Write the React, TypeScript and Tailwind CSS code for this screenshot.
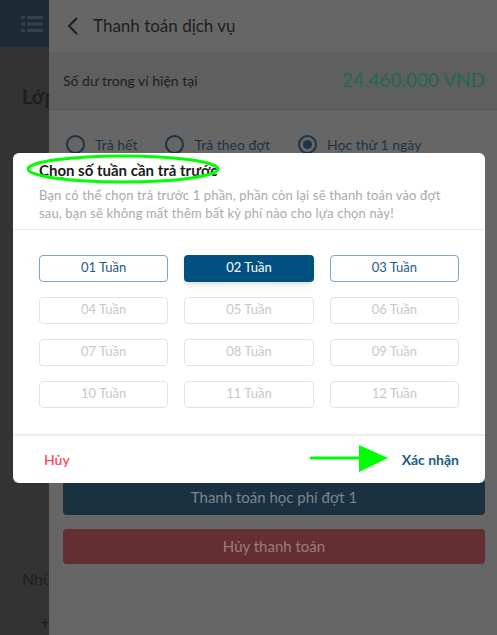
import React, { useState } from "react";

const weeks = Array.from({ length: 12 }, (_, i) => String(i + 1).padStart(2, "0"));

const Radio = ({ label, checked }: { label: string; checked?: boolean }) => (
  <div className="flex items-center gap-[10px]">
    <span className="flex h-[19px] w-[19px] items-center justify-center rounded-full border-2 border-[#1d3446]">
      {checked && <span className="h-[9px] w-[9px] rounded-full bg-[#1d3446]" />}
    </span>
    <span className="text-[14px] text-[#1d3446]">{label}</span>
  </div>
);

const App: React.FC = () => {
  const [selected, setSelected] = useState("02");
  const enabled = ["01", "02", "03"];

  return (
    <div
      className="relative flex h-[635px] w-[497px] overflow-hidden"
      style={{ fontFamily: "Lato, 'Open Sans', sans-serif" }}
    >
      {/* page behind the drawer */}
      <div className="flex w-[49px] flex-col bg-[#333333]">
        <div className="flex h-[47px] items-center bg-[#1e2a33] pl-[21px]">
          <svg width="22" height="20" viewBox="0 0 22 20" fill="#34414c">
            <rect x="0" y="2" width="4" height="3" />
            <rect x="6" y="2" width="16" height="3" />
            <rect x="0" y="8.5" width="4" height="3" />
            <rect x="6" y="8.5" width="16" height="3" />
            <rect x="0" y="15" width="4" height="3" />
            <rect x="6" y="15" width="16" height="3" />
          </svg>
        </div>
        <div className="mt-[34px] pl-[22px] text-[20px] font-bold text-[#1f1f1f]">Lớp</div>
        <div className="mt-[456px] pl-[22px] text-[16px] text-[#1f1f1f]">Những</div>
        <div className="mt-[22px] pl-[40px] text-[18px] leading-none text-[#1f1f1f]">+</div>
      </div>

      {/* drawer panel */}
      <div className="flex flex-1 flex-col bg-[#666666]">
        <div className="flex h-[52px] items-center gap-[14px] pl-[18px]">
          <svg width="12" height="18" viewBox="0 0 12 18" fill="none" stroke="#1e1e1e" strokeWidth="2">
            <path d="M10 1 L2 9 L10 17" />
          </svg>
          <span className="text-[17px] text-[#1e1e1e]">Thanh toán dịch vụ</span>
        </div>
        <div className="flex h-[58px] items-center justify-between border-b border-[#555555] bg-[#5f5f5f] pl-[14px] pr-[12px]">
          <span className="text-[14px] text-[#1e1e1e]">Số dư trong ví hiện tại</span>
          <span className="text-[19px] text-[#236b4a]">24.460.000 VND</span>
        </div>
        <div className="flex items-center gap-[28px] pl-[17px] pt-[24px]">
          <Radio label="Trả hết" />
          <Radio label="Trả theo đợt" />
          <Radio label="Học thử 1 ngày" checked />
        </div>
        <div className="mt-[325px] flex flex-col gap-[14px] pl-[14px] pr-[12px]">
          <div className="flex h-[35px] items-center justify-center rounded-[4px] bg-[#1a3142] text-[15px] text-[#7b858d]">
            Thanh toán học phí đợt 1
          </div>
          <div className="flex h-[35px] items-center justify-center rounded-[4px] bg-[#632f31] text-[15px] text-[#9a7d7e]">
            Hủy thanh toán
          </div>
        </div>
      </div>

      {/* modal */}
      <div className="absolute left-[13px] top-[153px] flex h-[330px] w-[472px] flex-col rounded-[6px] bg-white">
        <div className="border-b border-[#ececec] px-[26px] pb-[7px] pt-[6px]">
          <div className="text-[15px] font-bold text-[#1a1a1a]">Chọn số tuần cần trả trước</div>
          <p className="mt-[4px] text-[13px] leading-[18px] tracking-[0.15px] text-[#aaaaaa]">
            Bạn có thể chọn trả trước 1 phần, phần còn lại sẽ thanh toán vào đợt sau, bạn sẽ không mất thêm bất kỳ phí nào cho lựa chọn này!
          </p>
        </div>
        <div className="grid grid-cols-3 gap-x-[16px] gap-y-[15px] px-[26px] pb-[26px] pt-[25px]">
          {weeks.map((w) => {
            const on = enabled.includes(w);
            const active = selected === w;
            return (
              <button
                key={w}
                disabled={!on}
                onClick={() => setSelected(w)}
                className={
                  active
                    ? "h-[27px] rounded-[4px] bg-[#00517f] text-[13px] text-white shadow-md"
                    : on
                    ? "h-[27px] rounded-[4px] border border-[#7ba6c4] bg-white text-[13px] text-[#1d5a86]"
                    : "h-[27px] rounded-[4px] border border-[#e3e3e3] bg-white text-[13px] text-[#c8c8c8]"
                }
              >
                {w} Tuần
              </button>
            );
          })}
        </div>
        <div className="flex flex-1 items-center justify-between border-t-2 border-[#eeeeee] pl-[31px] pr-[26px]">
          <button className="text-[14px] font-semibold text-[#ff4b55]">Hủy</button>
          <button className="text-[14px] font-bold text-[#1b5a87]">Xác nhận</button>
        </div>
      </div>

      {/* annotations */}
      <svg className="pointer-events-none absolute left-0 top-0" width="497" height="635">
        <ellipse cx="123" cy="169" rx="95" ry="13" fill="none" stroke="#00ff00" strokeWidth="3" />
        <line x1="311" y1="458" x2="362" y2="458" stroke="#00ff00" strokeWidth="3" strokeLinecap="round" />
        <polygon points="359,445 388,458 359,472" fill="#00ff00" />
      </svg>
    </div>
  );
};

export default App;
